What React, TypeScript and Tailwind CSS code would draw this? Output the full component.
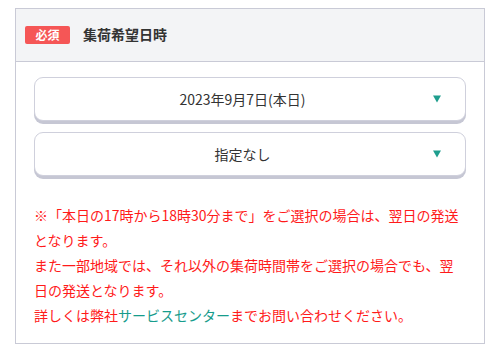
import React from "react";

const font = { fontFamily: '"Noto Sans CJK JP", "Noto Sans", sans-serif' };

function Select({ label }: { label: string }) {
  return (
    <div className="relative flex h-[44px] items-center justify-center rounded-[9px] border border-[#cfd0dc] bg-white pl-4 pr-[31px] shadow-[0_3px_0_0_#c6c7d4]">
      <span className="text-[14px] text-[#333333]">{label}</span>
      <span className="absolute right-[24px] top-1/2 -translate-y-1/2 h-0 w-0 border-x-[4px] border-t-[7px] border-x-transparent border-t-[#1f9e8e]" />
    </div>
  );
}

export default function App() {
  return (
    <div className="w-[500px] h-[355px] bg-white pt-[8px] pl-[15px]" style={font}>
      <div className="w-[470px] h-[336px] border border-[#c9cad6]">
        <div className="flex h-[53px] items-center gap-[13px] border-b border-[#c9cad6] bg-[#f3f4f6] pl-[9px] pb-[1px]">
          <span className="flex h-[18px] w-[45px] items-center justify-center rounded-[2px] bg-[#f55656] text-[12px] font-bold text-white leading-none">
            必須
          </span>
          <span className="text-[14px] font-bold text-[#333333]">集荷希望日時</span>
        </div>
        <div className="px-[18px] pt-[15px]">
          <div className="flex flex-col gap-[11px]">
            <Select label="2023年9月7日(本日)" />
            <Select label="指定なし" />
          </div>
          <p className="mt-[27px] w-[430px] text-[14px] leading-[25px] text-[#ff1a1a]">
            ※「本日の17時から18時30分まで」をご選択の場合は、翌日の発送となります。
            <br />
            また一部地域では、それ以外の集荷時間帯をご選択の場合でも、翌日の発送となります。
            <br />
            詳しくは弊社<span className="text-[#179c8c]">サービスセンター</span>までお問い合わせください。
          </p>
        </div>
      </div>
    </div>
  );
}
